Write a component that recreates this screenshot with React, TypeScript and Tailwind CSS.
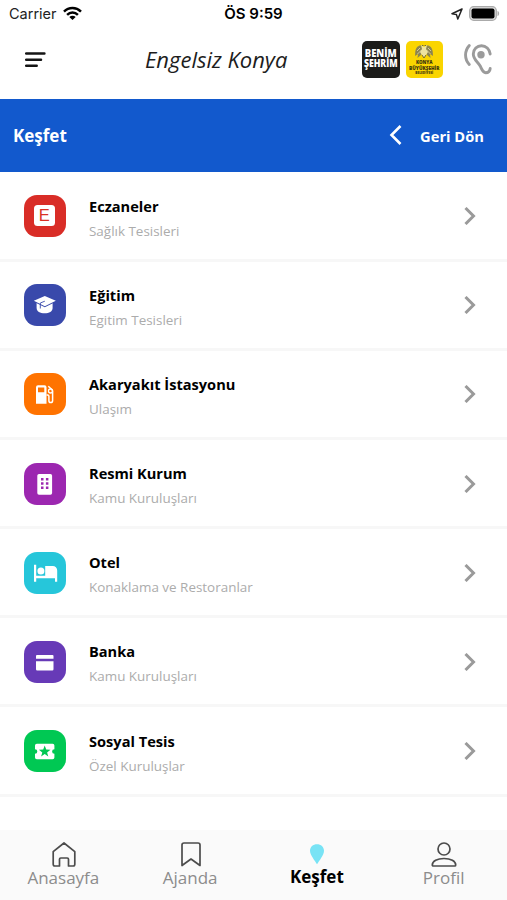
import type { ReactNode } from 'react';

type Place = {
  title: string;
  subtitle: string;
  color: string;
  icon: ReactNode;
};

const SchoolIcon = () => (
  <svg viewBox="0 0 42 42" className="h-full w-full" fill="none">
    <path d="M12.600 19v5c0 3.500 3.500 5.300 8 5.300s8-1.800 8-5.300v-5z" fill="#fff" />
    <path d="M9.800 16.700 20.800 12l11 4.700-11 5.500z" fill="#fff" stroke="#3949ab" strokeWidth="1.800" paintOrder="stroke" />
    <path d="M20.800 17.200l-4.500 1.800v5.500" stroke="#3949ab" strokeWidth="0.900" />
  </svg>
);

const GasIcon = () => (
  <svg viewBox="0 0 42 42" className="h-full w-full" fill="none">
    <path
      d="M14 12.300h6.500a2 2 0 0 1 2 2v16.400H12V14.300a2 2 0 0 1 2-2zm0 2.200v4.700h6.300v-4.700z"
      fill="#fff"
      fillRule="evenodd"
    />
    <path
      d="M22.500 22h1.200q1.200 0 1.200 1.200v4.600c0 2.400 3.700 2.400 3.700 0V18.300q0-1-.8-1.800l-3.500-3.200"
      stroke="#fff"
      strokeWidth="1.500"
    />
    <circle cx="26.500" cy="18" r="2" stroke="#fff" strokeWidth="1.300" />
  </svg>
);

const BuildingIcon = () => (
  <svg viewBox="0 0 42 42" className="h-full w-full">
    <rect x="13.300" y="11" width="14.800" height="20.700" rx="1.700" fill="#fff" />
    <path
      d="M17 15h2.500v2.500H17zM21.900 15h2.500v2.500h-2.500zM17 19.300h2.500v2.500H17zM21.900 19.300h2.500v2.500h-2.500zM17 23.600h2.500v2.500H17zM21.900 23.600h2.500v2.500h-2.500z"
      fill="#9c27b0"
    />
  </svg>
);

const HotelIcon = () => (
  <svg viewBox="0 0 42 42" className="h-full w-full" fill="#fff">
    <path d="M10 12.700h2.200v11.100h9V14h7.600a4.400 4.400 0 0 1 4.400 4.400v11.300H31v-3.500H12.200v3.500H10z" />
    <circle cx="16.900" cy="19" r="3.500" />
  </svg>
);

const BankIcon = () => (
  <svg viewBox="0 0 42 42" className="h-full w-full" fill="#fff">
    <path d="M13 14h15.500a1 1 0 0 1 1 1v2.700H12V15a1 1 0 0 1 1-1zM12 20.300h17.500v7.900a1.200 1.200 0 0 1-1.200 1.200H13.200A1.200 1.200 0 0 1 12 28.200z" />
  </svg>
);

const TicketIcon = () => (
  <svg viewBox="0 0 42 42" className="h-full w-full">
    <path
      d="M12.800 13.700h15.800a1.800 1.800 0 0 1 1.800 1.800v3.700a2.300 2.300 0 0 0 0 4.600v3.700a1.800 1.800 0 0 1-1.800 1.800H12.800a1.800 1.800 0 0 1-1.800-1.800v-3.700a2.300 2.300 0 0 0 0-4.600v-3.700a1.800 1.800 0 0 1 1.800-1.800z"
      fill="#fff"
    />
    <path d="M20.700 15.600l1.500 4 4.300.2-3.400 2.600 1.200 4.100-3.600-2.400-3.600 2.400 1.200-4.100-3.400-2.600 4.300-.2z" fill="#00c853" />
  </svg>
);

const PharmacyIcon = () => (
  <div className="mr-[1.500px] mb-[1.500px] flex h-[21.500px] w-[21.500px] items-center justify-center rounded-[3.500px] bg-white font-['Liberation_Sans'] text-[16.500px] leading-none text-[#d93025]">
    E
  </div>
);

const places: Place[] = [
  { title: 'Eczaneler', subtitle: 'Sağlık Tesisleri', color: 'bg-[#d92d27]', icon: <PharmacyIcon /> },
  { title: 'Eğitim', subtitle: 'Egitim Tesisleri', color: 'bg-[#3949ab]', icon: <SchoolIcon /> },
  { title: 'Akaryakıt İstasyonu', subtitle: 'Ulaşım', color: 'bg-[#ff7300]', icon: <GasIcon /> },
  { title: 'Resmi Kurum', subtitle: 'Kamu Kuruluşları', color: 'bg-[#9c27b0]', icon: <BuildingIcon /> },
  { title: 'Otel', subtitle: 'Konaklama ve Restoranlar', color: 'bg-[#26c6da]', icon: <HotelIcon /> },
  { title: 'Banka', subtitle: 'Kamu Kuruluşları', color: 'bg-[#673ab7]', icon: <BankIcon /> },
  { title: 'Sosyal Tesis', subtitle: 'Özel Kuruluşlar', color: 'bg-[#00c853]', icon: <TicketIcon /> },
];

const StatusBar = () => (
  <div className="grid h-7 grid-cols-3 items-center pr-[7px] pl-[9px] font-['Inter'] text-[14.500px] text-[#222]">
    <div className="flex items-center gap-[6px]">
      <span>Carrier</span>
      <svg width="19" height="15" viewBox="0 0 19 15" className="-mt-[2px]" fill="none" stroke="#000" strokeWidth="2.500">
        <path d="M1 5.600c4.800-4.700 12.200-4.700 17 0M4.100 8.800c3.100-3 7.700-3 10.800 0" />
        <path d="M9.500 14 6.300 10.900c1.800-1.700 4.600-1.700 6.400 0z" fill="#000" stroke="none" />
      </svg>
    </div>
    <div className="-ml-[2px] text-center text-[15px] font-semibold text-black">ÖS 9:59</div>
    <div className="flex items-center justify-end gap-[6px]">
      <svg width="12" height="12" viewBox="0 0 12 12" className="-mt-px" fill="none" stroke="#222" strokeWidth="1.500" strokeLinejoin="round">
        <path d="M11 1 1 5.800l4.400.6L6.800 11z" />
      </svg>
      <svg width="31" height="15" viewBox="0 0 31 15" className="-mt-[2px]">
        <rect x="0.700" y="0.700" width="26.600" height="13.600" rx="4" fill="#ddd" stroke="#aaa" strokeWidth="1.300" />
        <rect x="2.500" y="2.500" width="23" height="10" rx="2" fill="#000" />
        <path d="M28.500 5c2.200.5 2.200 4.500 0 5z" fill="#aaa" />
      </svg>
    </div>
  </div>
);

const Header = () => (
  <header className="flex h-[70.500px] items-start pt-[12px] pl-[25px]">
    <svg width="22" height="16" viewBox="0 0 22 16" className="mt-[12px]" stroke="#151515" strokeWidth="2.500" strokeLinecap="round">
      <path d="M1.200 1.500h18.200M1.200 7.700h14.800M1.200 13.800h10.500" />
    </svg>
    <h1 className="-mt-px ml-[98px] w-[217px] text-[22px] leading-10 text-[#1d1d1d] italic">Engelsiz Konya</h1>
    <div className="mt-[0.500px] flex h-[37.500px] w-[37.500px] flex-col items-center justify-center rounded-[5px] bg-[#1c1c1a] font-extrabold text-white">
      <span className="scale-y-110 text-[9.500px] leading-[11px]">BENİM</span>
      <span className="scale-y-110 text-[8.700px] leading-[11px]">ŞEHRİM</span>
    </div>
    <div className="mt-[0.500px] ml-[6px] flex h-[37.500px] w-[37.500px] flex-col items-center rounded-[5px] bg-[#fad500] pt-[3px] font-extrabold text-[#3c3510]">
      <svg width="20" height="15" viewBox="0 0 20 15">
        <path d="M8.500 2C5 .5 2 3 1.300 7.500L1 12l3-2-.5 4 4-3.500zM11.500 2C15 .5 18 3 18.700 7.500L19 12l-3-2 .5 4-4-3.500z" fill="#8b8451" />
        <path d="M3 7l3-3M3.500 10l4-4M17 7l-3-3M16.500 10l-4-4" stroke="#d1c89a" />
        <path d="M7 1l3 2 3-2-1 4 2 3-4 6-4-6 2-3z" fill="#eee3a0" />
        <path d="M8 1.500h1.500M10.500 1.500H12M8 11l2 3 2-3" stroke="#746c35" fill="none" />
      </svg>
      <span className="text-[4.500px] leading-[6px]">KONYA</span>
      <span className="scale-y-120 text-[4.700px] leading-[6px]">BÜYÜKŞEHİR</span>
      <span className="text-[3.200px] leading-[4.500px]">BELEDİYESİ</span>
    </div>
    <svg width="30" height="34" viewBox="0 0 30 34" className="mt-[2px] ml-[20px]" fill="none" stroke="#9b9b9b" strokeWidth="2.900" strokeLinecap="round">
      <path d="M6.300 3.500C1.300 9 1.300 17 6.300 22.500" />
      <path d="M27.200 12c-.6-5-4.300-8.300-8.700-8.300s-8.200 3.500-8.200 8.300c0 5.500 4.300 7.500 6.900 12 1.600 3 2.200 6.700 5.500 6.700 2.500 0 4.200-1.700 4.500-4.200" />
      <circle cx="18" cy="12.700" r="3.700" fill="#9b9b9b" stroke="none" />
    </svg>
  </header>
);

const PlaceRow = ({ title, subtitle, color, icon }: Place) => (
  <li className="flex h-[89.170px] items-center border-b-[3px] border-[#f7f7f7] pt-px pr-[31px] pl-[24px]">
    <div className={`flex h-[42px] w-[42px] shrink-0 items-center justify-center rounded-[13px] ${color}`}>{icon}</div>
    <div className="ml-[23px] flex-1 pt-[5px]">
      <p className="text-[14.600px] leading-6 font-bold text-black">{title}</p>
      <p className="pt-px text-[13.450px] leading-[25px] text-[#acacac]">{subtitle}</p>
    </div>
    <svg width="12" height="18" viewBox="0 0 12 18" fill="none" stroke="#9a9a9a" strokeWidth="3">
      <path d="M1.500 1 9.500 9l-8 8" />
    </svg>
  </li>
);

const TabBar = () => (
  <nav className="grid h-[70px] grid-cols-4 bg-[#fafafa] pt-[12px] text-[17px] leading-6 text-[#8c8c8c]">
    <div className="flex flex-col items-center">
      <svg width="24" height="25" viewBox="0 0 24 25" className="ml-px" fill="none" stroke="#4c4c4c" strokeWidth="1.700" strokeLinejoin="round">
        <path d="M1.200 9.700 12 1l10.800 8.700v12.600q0 1.700-1.700 1.700h-4.600v-6.700q0-1.300-1.300-1.300H8.800q-1.300 0-1.300 1.300V24H2.900q-1.700 0-1.700-1.700z" />
      </svg>
      <span className="-mt-px">Anasayfa</span>
    </div>
    <div className="flex flex-col items-center">
      <svg width="20" height="25" viewBox="0 0 20 25" className="ml-px" fill="none" stroke="#4c4c4c" strokeWidth="1.700" strokeLinejoin="round">
        <path d="M1 3q0-2 2-2h14q2 0 2 2v20.500l-9-6.500-9 6.500z" />
      </svg>
      <span className="-mt-px">Ajanda</span>
    </div>
    <div className="flex flex-col items-center">
      <svg width="16" height="24" viewBox="0 0 16 24">
        <path d="M8 22.300C6 19 1 13 1 8.800 1 5 4 2.300 8 2.300s7 2.700 7 6.500C15 13 10 19 8 22.300z" fill="#78e3f5" />
      </svg>
      <span className="-mt-[1.500px] text-[17px] font-bold text-black">Keşfet</span>
    </div>
    <div className="flex flex-col items-center">
      <svg width="26" height="25" viewBox="0 0 26 25" fill="none" stroke="#4c4c4c" strokeWidth="1.700">
        <circle cx="13" cy="7" r="6" />
        <path d="M1.300 23c0-4 5-6.500 11.700-6.500S24.700 19 24.700 23q0 1-1 1H2.300q-1 0-1-1z" />
      </svg>
      <span className="-mt-px">Profil</span>
    </div>
  </nav>
);

const App = () => {
  return (
    <div className="flex h-[900px] w-[507px] flex-col overflow-hidden bg-white font-['Open_Sans','Noto_Sans',sans-serif]">
      <StatusBar />
      <Header />
      <div className="flex h-[73px] shrink-0 items-center bg-[#1259cd] pr-[23px] pl-[13px] font-bold text-white">
        <h2 className="flex-1 pt-[2px] text-[17px]">Keşfet</h2>
        <button className="flex items-center gap-[18px] text-[14.700px]">
          <svg width="13" height="20" viewBox="0 0 13 20" fill="none" stroke="#fff" strokeWidth="2.600">
            <path d="M11.500 1 2.500 10l9 9" />
          </svg>
          <span className="pt-[2px]">Geri Dön</span>
        </button>
      </div>
      <ul className="flex-1 pt-px">
        {places.map((place) => (
          <PlaceRow key={place.title} {...place} />
        ))}
      </ul>
      <TabBar />
    </div>
  );
};

export default App;
